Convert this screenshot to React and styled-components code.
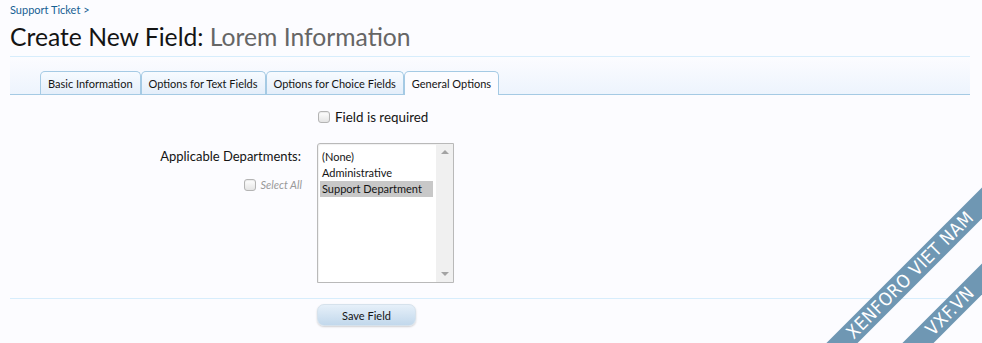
import React from "react";
import styled, { createGlobalStyle } from "styled-components";

const GlobalStyle = createGlobalStyle`
  html, body {
    margin: 0;
    padding: 0;
    background: #fcfcff;
  }
  body {
    font-family: Lato, "Open Sans", Arial, sans-serif;
    color: #141414;
    overflow: hidden;
  }
`;

const Page = styled.div`
  position: relative;
  width: 982px;
  height: 343px;
  overflow: hidden;
`;

const Content = styled.div`
  padding: 0 12px 0 10px;
`;

const Breadcrumb = styled.a`
  display: block;
  font-size: 11px;
  line-height: 20px;
  color: #176093;
  text-decoration: none;
`;

const Title = styled.h1`
  margin: 2px 0 0;
  padding-bottom: 4px;
  font-size: 24.7px;
  font-weight: normal;
  line-height: 30px;
  color: #141414;
  border-bottom: 1px solid #d7edfc;
`;

const Muted = styled.span`
  color: #666;
`;

const TabBar = styled.ul`
  display: flex;
  align-items: flex-end;
  height: 38px;
  margin: 0;
  padding: 0 0 0 30px;
  list-style: none;
  box-sizing: border-box;
  border-bottom: 1px solid #a5cae4;
  background: linear-gradient(to bottom, #fcfcff 0%, #edf4fd 100%);
`;

const Tab = styled.li`
  height: ${(p) => (p.$active ? "24px" : "23px")};
  margin-bottom: ${(p) => (p.$active ? "-1px" : "0")};
  padding: 0 7px;
  box-sizing: border-box;
  display: flex;
  align-items: center;
  font-size: 11px;
  color: #141414;
  border: 1px solid #a5cae4;
  border-bottom: none;
  border-radius: 5px 5px 0 0;
  background: ${(p) =>
    p.$active
      ? "#fcfcff"
      : "linear-gradient(to bottom, #f7fbff 0%, #e4eefa 100%)"};
`;

const Form = styled.div`
  padding-top: 12px;
`;

const Row = styled.div`
  display: grid;
  grid-template-columns: 291px 1fr;
  column-gap: 16px;
  margin-bottom: ${(p) => p.$gap || 0}px;
`;

const LabelCol = styled.div`
  display: flex;
  flex-direction: column;
  align-items: flex-end;
  padding-top: 5px;
`;

const Label = styled.label`
  font-size: 13px;
  line-height: 16px;
  color: #141414;
`;

const Explain = styled.label`
  display: flex;
  align-items: center;
  gap: 4px;
  margin-top: 14px;
  margin-right: -1px;
  font-size: 11px;
  font-style: italic;
  color: #999;
`;

const Check = styled.span`
  display: inline-block;
  width: 12px;
  height: 12px;
  box-sizing: border-box;
  border: 1px solid #b4b4b4;
  border-radius: 3px;
  background: linear-gradient(to bottom, #ffffff 0%, #e4e4e4 100%);
  box-shadow: inset 0 1px 1px rgba(0, 0, 0, 0.08);
`;

const CheckLine = styled.label`
  display: flex;
  align-items: center;
  gap: 5px;
  height: 20px;
  margin-left: 1px;
  font-size: 13.4px;
  color: #141414;
`;

const ListBox = styled.div`
  display: flex;
  width: 137px;
  height: 140px;
  box-sizing: border-box;
  border: 1px solid #b9b9b9;
  border-radius: 3px 0 0 0;
  background: #fff;
  box-shadow: inset 1px 1px 1px rgba(0, 0, 0, 0.06);
`;

const Options = styled.div`
  flex: 1;
  padding: 5px 0 0 2px;
`;

const Option = styled.div`
  height: 16px;
  line-height: 16px;
  padding-left: 2px;
  font-size: 11px;
  color: #141414;
  background: ${(p) => (p.$selected ? "#c8c8c8" : "transparent")};
`;

const Scrollbar = styled.div`
  width: 17px;
  margin-left: 3px;
  background: #f0f0f0;
  display: flex;
  flex-direction: column;
  justify-content: space-between;
  align-items: center;
  padding: 6px 0 6px;
`;

const Arrow = styled.span`
  width: 0;
  height: 0;
  border-left: 4px solid transparent;
  border-right: 4px solid transparent;
  ${(p) =>
    p.$down
      ? "border-top: 4px solid #a3a3a3;"
      : "border-bottom: 4px solid #a3a3a3;"}
`;

const Divider = styled.div`
  border-top: 1px solid #d7edfc;
  margin-top: 15px;
`;

const Button = styled.button`
  width: 99px;
  height: 22px;
  margin: 5px 0 0 307px;
  padding: 0;
  font-family: inherit;
  font-size: 11px;
  color: #141414;
  border: 1px solid #d6e2ec;
  border-radius: 7px;
  background: linear-gradient(to bottom, #e6f0f9 0%, #c2d8ec 100%);
  box-shadow: 0 1px 2px rgba(0, 0, 0, 0.18);
`;

const Ribbon = styled.div`
  position: absolute;
  left: ${(p) => p.$x - 200}px;
  top: ${(p) => p.$y - 11}px;
  width: 400px;
  height: 22px;
  line-height: 22px;
  background: #6f97b3;
  color: #fff;
  text-align: center;
  font-family: "DejaVu Sans Condensed", "Liberation Sans Narrow", sans-serif;
  font-stretch: condensed;
  font-size: 18px;
  letter-spacing: 0.5px;
  transform: rotate(-45deg);
  pointer-events: none;
`;

export default function App() {
  return (
    <Page>
      <GlobalStyle />
      <Content>
        <Breadcrumb>Support Ticket &gt;</Breadcrumb>
        <Title>
          Create New Field: <Muted>Lorem Information</Muted>
        </Title>
        <TabBar>
          <Tab>Basic Information</Tab>
          <Tab>Options for Text Fields</Tab>
          <Tab>Options for Choice Fields</Tab>
          <Tab $active>General Options</Tab>
        </TabBar>
        <Form>
          <Row $gap={16}>
            <div />
            <CheckLine>
              <Check />
              Field is required
            </CheckLine>
          </Row>
          <Row>
            <LabelCol>
              <Label>Applicable Departments:</Label>
              <Explain>
                <Check />
                Select All
              </Explain>
            </LabelCol>
            <ListBox>
              <Options>
                <Option>(None)</Option>
                <Option>Administrative</Option>
                <Option $selected>Support Department</Option>
              </Options>
              <Scrollbar>
                <Arrow />
                <Arrow $down />
              </Scrollbar>
            </ListBox>
          </Row>
          <Divider />
          <Button>Save Field</Button>
        </Form>
      </Content>
      <Ribbon $x={910} $y={275}>XENFORO VIET NAM</Ribbon>
      <Ribbon $x={950} $y={311}>VXF.VN</Ribbon>
    </Page>
  );
}
